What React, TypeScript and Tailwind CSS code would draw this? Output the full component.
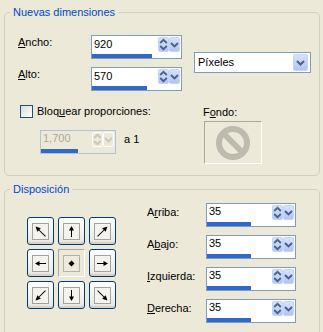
import React from "react";

function SpinButtons({ disabled }: { disabled?: boolean }) {
  const col = disabled ? "#C9C7BA" : "#4D6185";
  const cls = disabled
    ? "border border-white"
    : "border border-[#C3D3F9] bg-linear-to-b from-[#D8E3FC] to-[#B1C5F3]";
  return (
    <div className="flex">
      <div className={`w-[11px] h-[15px] rounded-[2px] ${cls} flex items-center justify-center`}>
        <svg width="9" height="13" viewBox="0 0 9 13">
          <polyline points="1.2,5 4.5,1.8 7.8,5" fill="none" stroke={col} strokeWidth="1.8" />
          <polyline points="1.2,8 4.5,11.2 7.8,8" fill="none" stroke={col} strokeWidth="1.8" />
        </svg>
      </div>
      <div className={`w-[11px] h-[15px] rounded-[2px] ${cls} flex items-center justify-center`}>
        <svg width="9" height="13" viewBox="0 0 9 13">
          <polyline points="1,5 4.5,8.5 8,5" fill="none" stroke={col} strokeWidth="1.9" />
        </svg>
      </div>
    </div>
  );
}

function SpinInput({
  value,
  w,
  bar,
  pt,
  disabled,
}: {
  value: string;
  w: string;
  bar: string;
  pt: string;
  disabled?: boolean;
}) {
  return (
    <div
      className={`h-[24px] border flex flex-col ${w} ${
        disabled ? "border-[#B2C2D8] bg-[#ECE9D8]" : "border-[#7F9DB9] bg-white"
      }`}
    >
      <div className="flex flex-1">
        <div className={`flex-1 pl-[2px] ${pt} ${disabled ? "text-[#ACA899]" : ""}`}>{value}</div>
        <div className="pt-[1px] pr-[1px]">
          <SpinButtons disabled={disabled} />
        </div>
      </div>
      <div className={`h-[4px] bg-[#316AC5] ${bar}`} />
    </div>
  );
}

function Arrow({ rot }: { rot: number }) {
  return (
    <svg width="15" height="15" viewBox="0 0 15 15">
      <g transform={`rotate(${rot} 7.5 7.5)`}>
        <line x1="7.5" y1="5" x2="7.5" y2={rot % 90 === 0 ? 13 : 14.5} stroke="#000" strokeWidth="1" />
        <polygon points={rot % 90 === 0 ? "7.5,2 5,6.5 10,6.5" : "7.5,0.5 5,5.5 10,5.5"} fill="#000" />
      </g>
    </svg>
  );
}

function GridBtn({ rot, center }: { rot?: number; center?: boolean }) {
  if (center) {
    return (
      <div className="w-[27px] h-[28px] border border-t-[#ACA899] border-l-[#ACA899] border-b-white border-r-white bg-[#ECE9D8] flex items-center justify-center">
        <div className="w-[17px] h-[17px] border border-[#B5B2A6] bg-[#EEEBDD] flex items-center justify-center">
          <svg width="15" height="15" viewBox="0 0 15 15">
            <polygon points="7.5,4.5 10.5,7.5 7.5,10.5 4.5,7.5" fill="#000" />
          </svg>
        </div>
      </div>
    );
  }
  return (
    <div className="w-[27px] h-[28px] rounded-[3px] border border-[#003C74] bg-linear-to-b from-white to-[#E8E6DC] shadow-[inset_0_-2px_0_#D8D2C6] flex items-center justify-center">
      <div className="w-[17px] h-[17px] border border-[#A2A2A0] bg-[#F4F3EE] flex items-center justify-center">
        <Arrow rot={rot ?? 0} />
      </div>
    </div>
  );
}

function Row({ label, bar }: { label: React.ReactNode; bar: string }) {
  return (
    <div className="flex items-start">
      <div className="w-[59px] pt-[3px]">{label}</div>
      <SpinInput value="35" w="w-[90px]" bar={bar} pt="pt-[1px]" />
    </div>
  );
}

export default function App() {
  return (
    <div className="w-[323px] h-[332px] overflow-hidden bg-[#ECE9D8] pl-[4px] pr-[3px] pt-[6px] font-['Liberation_Sans',Arial,sans-serif] text-[11px] leading-[13px] text-black">
      <fieldset className="h-[170px] border border-[#D0D0BF] rounded-[5px]">
        <legend className="ml-[5px] px-[3px] text-[#0046D5]">Nuevas dimensiones</legend>
        <div className="flex">
          <div className="w-[177px] pt-[16px]">
            <div className="flex items-start ml-[13px]">
              <div className="w-[73px] pt-[1px]">
                <span className="underline">A</span>ncho:
              </div>
              <SpinInput value="920" w="w-[91px]" bar="w-[60px]" pt="pt-[2px]" />
            </div>
            <div className="flex items-start ml-[13px] mt-[8px]">
              <div className="w-[73px] pt-[1px]">
                <span className="underline">A</span>lto:
              </div>
              <SpinInput value="570" w="w-[91px]" bar="w-[55px]" pt="pt-[2px]" />
            </div>
            <div className="flex items-center ml-[15px] mt-[14px]">
              <div className="w-[13px] h-[13px] border border-[#1C5180] bg-linear-to-br from-[#DCDCD7] to-white" />
              <span className="ml-[4px] whitespace-nowrap">
                Bloq<span className="underline">u</span>ear proporciones:
              </span>
            </div>
            <div className="flex items-start ml-[35px] mt-[12px]">
              <SpinInput disabled value="1,700" w="w-[76px]" bar="w-[37px]" pt="pt-[1px]" />
              <span className="ml-[8px] pt-[3px]">a 1</span>
            </div>
          </div>
          <div className="ml-[12px] pt-[33px]">
            <div className="w-[117px] h-[21px] border border-[#7F9DB9] bg-white flex items-center justify-between pl-[3px] pr-[2px]">
              <span>Píxeles</span>
              <div className="w-[15px] h-[17px] rounded-[2px] border border-[#C3D3F9] bg-linear-to-b from-[#D8E3FC] to-[#B1C5F3] flex items-center justify-center">
                <svg width="11" height="11" viewBox="0 0 11 11">
                  <polyline points="2,4 5.5,7.5 9,4" fill="none" stroke="#4D6185" strokeWidth="2" />
                </svg>
              </div>
            </div>
            <div className="ml-[9px] mt-[33px]">
              F<span className="underline">o</span>ndo:
            </div>
            <div className="ml-[10px] mt-[2px] w-[58px] h-[43px] border border-t-[#ACA899] border-l-[#ACA899] border-b-white border-r-white flex items-center justify-center">
              <svg width="36" height="36" viewBox="0 0 36 36">
                <circle cx="18" cy="18" r="14" fill="none" stroke="#BDBAAE" strokeWidth="6" />
                <line x1="8" y1="8" x2="28" y2="28" stroke="#BDBAAE" strokeWidth="6" />
              </svg>
            </div>
          </div>
        </div>
      </fieldset>

      <fieldset className="mt-[7px] h-[160px] border border-[#D0D0BF] rounded-[5px]">
        <legend className="ml-[5px] px-[3px] text-[#0046D5]">Disposición</legend>
        <div className="flex items-center pt-[7px]">
          <div className="ml-[22px] grid grid-cols-[27px_27px_27px] grid-rows-[28px_28px_28px] gap-[4px]">
            <GridBtn rot={-45} />
            <GridBtn rot={0} />
            <GridBtn rot={45} />
            <GridBtn rot={-90} />
            <GridBtn center />
            <GridBtn rot={90} />
            <GridBtn rot={-135} />
            <GridBtn rot={180} />
            <GridBtn rot={135} />
          </div>
          <div className="ml-[31px] flex flex-col gap-[8px]">
            <Row
              label={
                <>
                  A<span className="underline">r</span>riba:
                </>
              }
              bar="w-[44px]"
            />
            <Row
              label={
                <>
                  A<span className="underline">b</span>ajo:
                </>
              }
              bar="w-[44px]"
            />
            <Row
              label={
                <>
                  <span className="underline">I</span>zquierda:
                </>
              }
              bar="w-[44px]"
            />
            <Row
              label={
                <>
                  <span className="underline">D</span>erecha:
                </>
              }
              bar="w-[44px]"
            />
          </div>
        </div>
      </fieldset>
    </div>
  );
}
